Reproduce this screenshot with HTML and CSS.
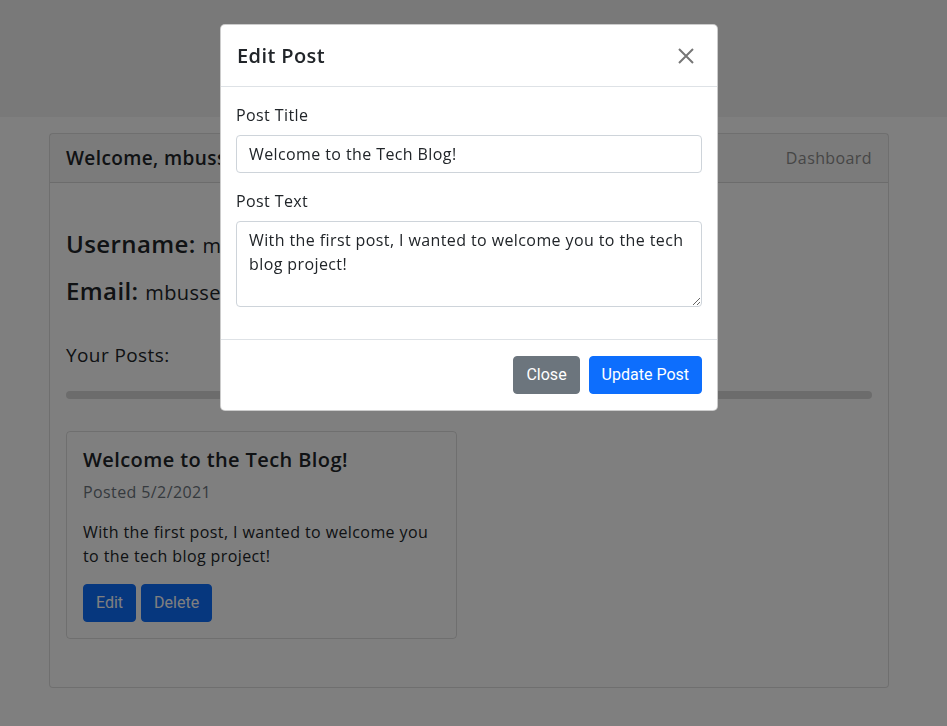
FILE: index.html
```html
<!DOCTYPE html>
<html lang="en">
<head>
<meta charset="utf-8">
<title>Tech Blog - Dashboard</title>
<link rel="stylesheet" href="styles.css">
</head>
<body>
  <header class="site-header"></header>
  <main class="container">
    <section class="card">
      <div class="card-header">
        <h2 class="card-header-title">Welcome, mbusse!</h2>
        <a class="nav-link" href="#">Dashboard</a>
      </div>
      <div class="card-body">
        <h4 class="info first"><span class="info-label">Username:</span> <span class="info-value">mbusse</span></h4>
        <h4 class="info"><span class="info-label">Email:</span> <span class="info-value">mbusse@example.com</span></h4>
        <h5 class="posts-heading">Your Posts:</h5>
        <div class="divider-bar"></div>
        <article class="post-card">
          <h5 class="post-title">Welcome to the Tech Blog!</h5>
          <h6 class="post-date">Posted 5/2/2021</h6>
          <p class="post-text">With the first post, I wanted to welcome you<br>to the tech blog project!</p>
          <div class="post-actions">
            <button class="btn btn-primary">Edit</button>
            <button class="btn btn-primary">Delete</button>
          </div>
        </article>
      </div>
    </section>
  </main>

  <div class="backdrop"></div>

  <div class="modal">
    <div class="modal-header">
      <h5 class="modal-title">Edit Post</h5>
      <button class="btn-close" aria-label="Close">
        <svg width="16" height="16" viewBox="0 0 16 16"><path d="M1 1L15 15M15 1L1 15" stroke="#767676" stroke-width="2" fill="none"/></svg>
      </button>
    </div>
    <div class="modal-body">
      <label class="form-label">Post Title</label>
      <input class="form-control" type="text" value="Welcome to the Tech Blog!">
      <label class="form-label">Post Text</label>
      <textarea class="form-control textarea" rows="3">With the first post, I wanted to welcome you to the tech
blog project!</textarea>
    </div>
    <div class="modal-footer">
      <button class="btn btn-secondary">Close</button>
      <button class="btn btn-primary">Update Post</button>
    </div>
  </div>
</body>
</html>
```
FILE: styles.css
```css
* { box-sizing: border-box; }

body {
  margin: 0;
  font-family: "Open Sans", "DejaVu Sans", sans-serif;
  font-size: 16px;
  line-height: 1.5;
  color: #212529;
  background: #ffffff;
  letter-spacing: 0.4px;
}

.site-header {
  height: 117px;
  background: #f3f3f3;
}

.container {
  width: 840px;
  margin: 16px 0 0 49px;
}

.card {
  border: 1px solid rgba(0,0,0,0.125);
  border-radius: 4px;
  background: #fff;
}

.card-header {
  height: 49px;
  display: flex;
  align-items: center;
  justify-content: space-between;
  padding: 0 16px;
  background: rgba(0,0,0,0.03);
  border-bottom: 1px solid rgba(0,0,0,0.125);
}

.card-header-title {
  margin: 0;
  font-size: 19px;
  font-weight: 600;
  line-height: 30px;
}

.nav-link {
  color: #8d8d8d;
  text-decoration: none;
  font-size: 16px;
}

.card-body {
  padding: 46px 16px 16px;
}

.info {
  margin: 0 0 16px;
  font-size: 24px;
  line-height: 29px;
  font-weight: 600;
}

.info-value {
  font-size: 20px;
  font-weight: 400;
}

.posts-heading {
  margin: 36px 0 0;
  font-size: 19px;
  font-weight: 400;
  line-height: 24px;
}

.divider-bar {
  height: 8px;
  margin-top: 24px;
  border-radius: 4px;
  background: #d9d9d9;
}

.post-card {
  width: 391px;
  margin: 32px 0 32px;
  padding: 16px 16px 16px;
  border: 1px solid rgba(0,0,0,0.125);
  border-radius: 4px;
}

.post-title {
  margin: 0 0 8px;
  font-size: 20px;
  font-weight: 600;
  line-height: 24px;
}

.post-date {
  margin: 0 0 16px;
  font-size: 16px;
  font-weight: 400;
  line-height: 24px;
  color: #6c757d;
}

.post-text {
  margin: 0 0 16px;
  font-size: 16px;
  line-height: 24px;
}

.post-actions {
  display: flex;
  gap: 5px;
}

.btn {
  font-family: Roboto, "Liberation Sans", sans-serif;
  font-size: 16px;
  line-height: 24px;
  letter-spacing: 0;
  padding: 6px 12px;
  border: 1px solid transparent;
  border-radius: 4px;
  color: #fff;
  cursor: pointer;
}

.btn-primary {
  background: #0d6efd;
  border-color: #0d6efd;
}

.btn-secondary {
  background: #6c757d;
  border-color: #6c757d;
}

.backdrop {
  position: fixed;
  inset: 0;
  background: rgba(0,0,0,0.5);
}

.modal {
  position: fixed;
  top: 24px;
  left: 220px;
  width: 498px;
  background: #fff;
  border: 1px solid rgba(0,0,0,0.2);
  border-radius: 5px;
}

.modal-header {
  display: flex;
  align-items: center;
  justify-content: space-between;
  padding: 16px;
  height: 62px;
  border-bottom: 1px solid #dee2e6;
}

.modal-title {
  margin: 0;
  font-size: 20px;
  font-weight: 600;
  line-height: 30px;
}

.btn-close {
  width: 32px;
  height: 32px;
  margin-right: -1px;
  padding: 0;
  border: 0;
  background: transparent;
  display: flex;
  align-items: center;
  justify-content: center;
  cursor: pointer;
}

.modal-body {
  display: flex;
  flex-direction: column;
  padding: 16px 15px 32px;
}

.form-label {
  display: block;
  margin-bottom: 8px;
  font-size: 16px;
  line-height: 24px;
}

.form-control {
  display: block;
  width: 100%;
  height: 38px;
  padding: 6px 12px;
  font-family: inherit;
  font-size: 16px;
  line-height: 24px;
  letter-spacing: 0.4px;
  color: #212529;
  border: 1px solid #ced4da;
  border-radius: 4px;
  background: #fff;
  margin-bottom: 16px;
}

.textarea {
  height: 86px;
  margin-bottom: 0;
  resize: vertical;
}

.modal-footer {
  display: flex;
  justify-content: flex-end;
  gap: 9px;
  padding: 16px 15px 16px;
  border-top: 1px solid #dee2e6;
}
```
